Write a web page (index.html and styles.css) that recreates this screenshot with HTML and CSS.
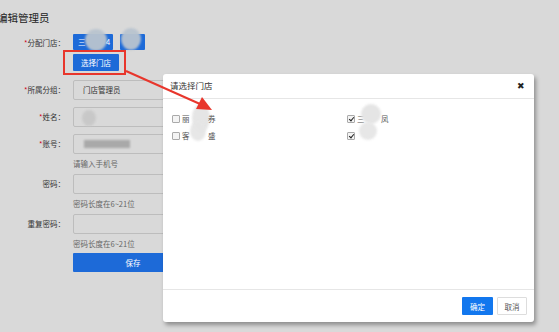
FILE: index.html
```html
<!DOCTYPE html>
<html lang="zh">
<head>
<meta charset="utf-8">
<link rel="stylesheet" href="styles.css">
</head>
<body>
<div class="page">
  <h1 class="title">编辑管理员</h1>
  <div class="form">
    <div class="label req">分配门店：</div>
    <div class="field tags">
      <span class="tag">三<i class="blur b1"></i><em class="tail">4</em></span>
      <span class="tag small"><i class="blur b2"></i></span>
    </div>
    <div class="label"></div>
    <div class="field pickrow">
      <span class="pick-wrap"><button class="btn pick">选择门店</button><span class="mark"></span></span>
    </div>
    <div class="label req">所属分组：</div>
    <div class="field"><div class="input">门店管理员</div></div>
    <div class="label req">姓名：</div>
    <div class="field"><div class="input"><i class="blur b3"></i></div></div>
    <div class="label req">账号：</div>
    <div class="field"><div class="input"><i class="bar"></i></div></div>
    <div class="label"></div>
    <div class="field hint">请输入手机号</div>
    <div class="label">密码：</div>
    <div class="field"><div class="input"></div></div>
    <div class="label"></div>
    <div class="field hint">密码长度在6~21位</div>
    <div class="label">重复密码：</div>
    <div class="field"><div class="input"></div></div>
    <div class="label"></div>
    <div class="field hint">密码长度在6~21位</div>
    <div class="label"></div>
    <div class="field"><button class="btn save">保存</button></div>
  </div>
</div>

<div class="modal">
  <div class="modal-head">
    <span>请选择门店</span>
    <span class="close">✖</span>
  </div>
  <div class="modal-body">
    <label class="item"><span class="cb"></span>丽<i class="blur b4"></i><em class="t2">券</em></label>
    <label class="item"><span class="cb on"></span>三<i class="blur b5"></i><em class="t3">凤</em></label>
    <label class="item"><span class="cb"></span>客<i class="blur b6"></i><em class="t2">盛</em></label>
    <label class="item"><span class="cb on"></span><i class="blur b7"></i></label>
  </div>
  <div class="modal-foot">
    <button class="btn ok">确定</button>
    <button class="btn cancel">取消</button>
  </div>
</div>

<svg class="arrow" width="559" height="332" viewBox="0 0 559 332">
  <line x1="126" y1="71" x2="200" y2="104" stroke="#e8362c" stroke-width="2"/>
  <polygon points="212,110 196,109 202,97" fill="#e8362c"/>
</svg>
</body>
</html>
```
FILE: styles.css
```css
* { box-sizing: border-box; }
html, body { margin: 0; padding: 0; }
body {
  width: 559px;
  height: 332px;
  overflow: hidden;
  background: #d9d9d9;
  font-family: "Noto Sans CJK SC", "Noto Sans", sans-serif;
  color: #333;
  position: relative;
}
.page { padding: 9px 0 0 0; }
.title {
  margin: 0 0 0 -3px;
  font-size: 10.5px;
  font-weight: normal;
  line-height: 18px;
  color: #222;
}
.form {
  margin-top: 7px;
  display: grid;
  grid-template-columns: 65px 1fr;
  column-gap: 8px;
  align-items: center;
}
.label {
  text-align: right;
  font-size: 7.5px;
  color: #333;
}
.label.req::before { content: "*"; color: #d0021b; }
.field { font-size: 7.5px; }
.tags { display: flex; gap: 7px; height: 16px; }
.tag {
  position: relative;
  width: 40px;
  height: 16px;
  background: #1d6ad8;
  color: #fff;
  font-size: 7.5px;
  line-height: 16px;
  padding-left: 5px;
  border-radius: 1px;
}
.tag .tail { position: absolute; left: 33px; font-style: normal; }
.tag.small { width: 25px; }
.blur {
  position: absolute;
  display: block;
  border-radius: 50%;
  background: #d0d0d0;
  filter: blur(1px);
  opacity: 0.95;
}
.b1 { left: 12px; top: -5px; width: 22px; height: 22px; background: #b9c4cf; }
.b2 { left: 1px; top: -6px; width: 20px; height: 22px; background: #b9c4cf; }
.b3 { left: 8px; top: 2px; width: 14px; height: 16px; background: #c8c8c8; }
.b4 { left: 20px; top: -6px; width: 18px; height: 28px; background: #e4e4e4; }
.b5 { left: 14px; top: -6px; width: 20px; height: 20px; background: #e4e4e4; }
.b6 { left: 18px; top: -6px; width: 16px; height: 20px; background: #e6e6e6; }
.b7 { left: 12px; top: -5px; width: 18px; height: 18px; background: #e6e6e6; }
.pickrow { height: 26px; }
.pick-wrap { position: relative; display: inline-block; margin-top: 4px; }
.mark {
  position: absolute;
  left: -10px;
  top: -4px;
  right: -7px;
  bottom: -4px;
  border: 2px solid #e8362c;
}
.btn {
  font-family: inherit;
  border: none;
  border-radius: 1px;
  cursor: pointer;
  padding: 0;
}
.pick {
  display: block;
  width: 46px;
  height: 17px;
  background: #1d6ad8;
  color: #fff;
  font-size: 7.5px;
}
.input {
  position: relative;
  width: 120px;
  height: 20px;
  margin: 3.5px 0;
  border: 1px solid #bdbdbd;
  border-radius: 2px;
  background: #d9d9d9;
  font-size: 7.5px;
  line-height: 18px;
  padding-left: 9px;
  color: #333;
}
.bar {
  position: absolute;
  left: 10px; top: 5px;
  width: 46px; height: 8px;
  background: #a9a9a9;
  filter: blur(0.8px);
}
.hint { font-size: 7.5px; color: #666; height: 13px; line-height: 13px; }
.save {
  width: 120px;
  height: 19px;
  margin-top: 3px;
  background: #1d6ad8;
  color: #fff;
  font-size: 7.5px;
}

.modal {
  position: absolute;
  left: 163px;
  top: 74px;
  width: 371px;
  height: 248px;
  background: #fff;
  border-radius: 3px;
  box-shadow: 2px 3px 4px rgba(0,0,0,0.35);
  display: flex;
  flex-direction: column;
}
.modal-head {
  height: 25px;
  border-bottom: 1px solid #e6e6e6;
  display: flex;
  align-items: center;
  justify-content: space-between;
  padding: 0 9px 2px 7px;
  font-size: 8.5px;
  color: #333;
}
.close { font-size: 9px; color: #222; }
.modal-body {
  flex: 1;
  display: grid;
  grid-template-columns: 175px 1fr;
  grid-auto-rows: 17px;
  align-content: start;
  padding: 11px 0 0 9px;
}
.item {
  position: relative;
  display: flex;
  align-items: center;
  gap: 2px;
  font-size: 7.5px;
  color: #555;
}
.item em { position: absolute; font-style: normal; }
.item .t2 { left: 36px; }
.item .t3 { left: 34px; }
.cb {
  width: 8px;
  height: 8px;
  border: 1px solid #aaa;
  border-radius: 1px;
  background: #f4f4f4;
  position: relative;
}
.cb.on::after {
  content: "";
  position: absolute;
  left: 2px; top: 0px;
  width: 2px; height: 4px;
  border: solid #222;
  border-width: 0 1.5px 1.5px 0;
  transform: rotate(40deg);
}
.modal-foot {
  height: 33px;
  border-top: 1px solid #e6e6e6;
  display: flex;
  justify-content: flex-end;
  align-items: center;
  gap: 4px;
  padding: 0 7px 0 0;
}
.ok {
  width: 31px; height: 18px;
  background: #1277ee;
  color: #fff;
  font-size: 7.5px;
}
.cancel {
  width: 30px; height: 18px;
  background: #fff;
  border: 1px solid #ddd;
  color: #555;
  font-size: 7.5px;
}
.arrow { position: absolute; left: 0; top: 0; pointer-events: none; }
```
